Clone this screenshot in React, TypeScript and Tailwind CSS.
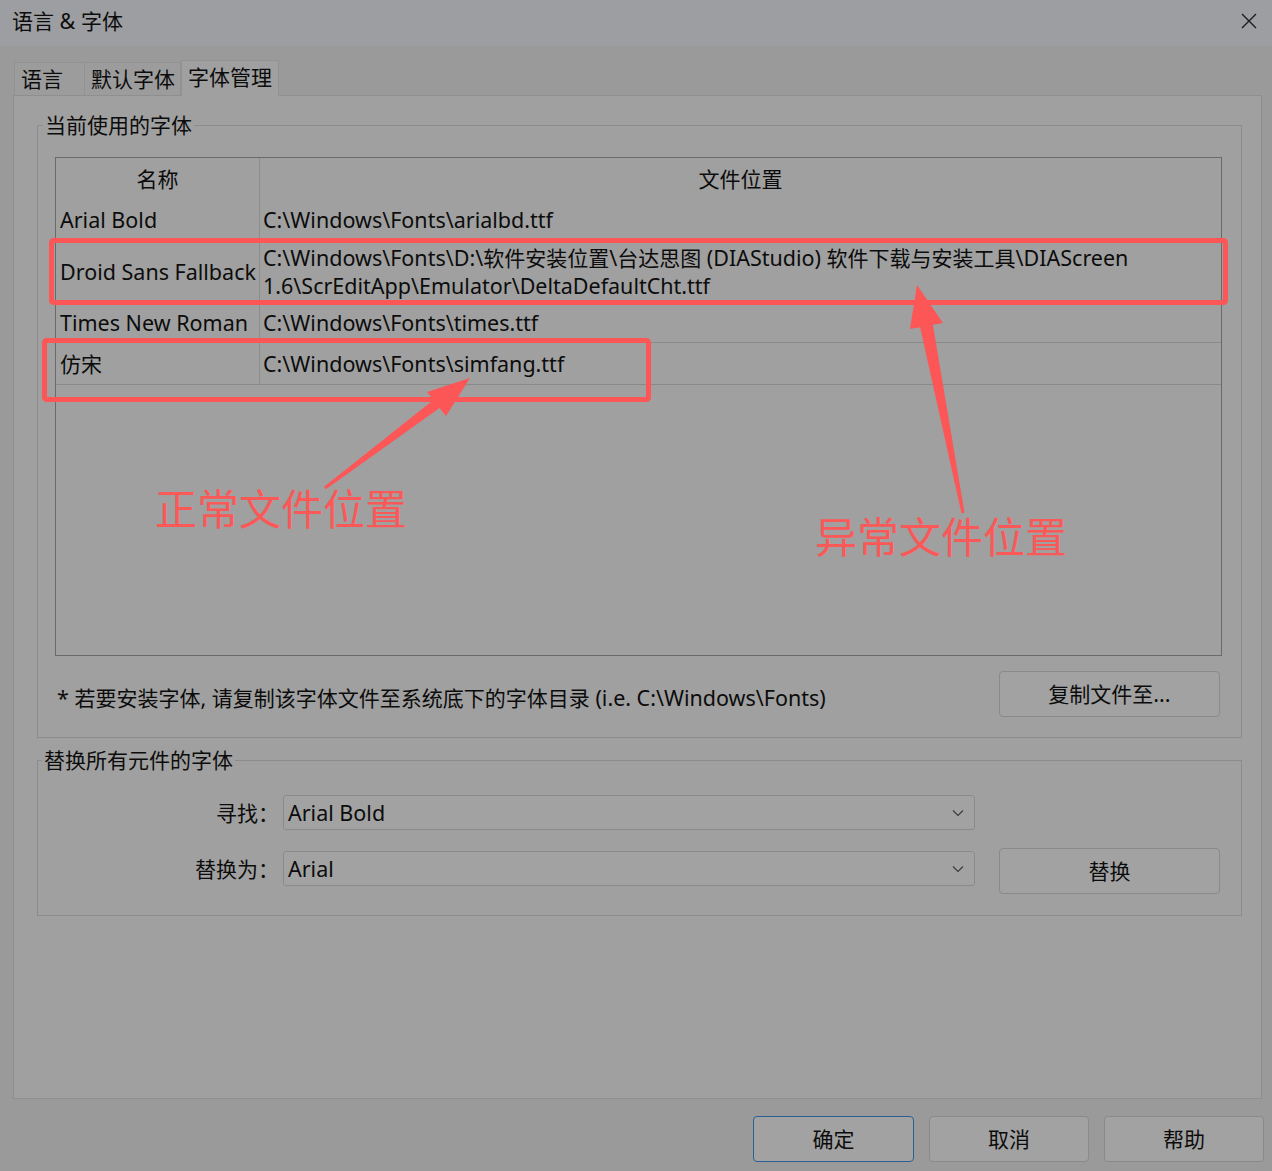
import React from "react";

const CJK = /([\u3000-\u303f\u4e00-\u9fff\uff00-\uffef]+)/;

function T({ s }: { s: string }) {
  const parts = s.split(CJK);
  return (
    <>
      {parts.map((p, i) =>
        i % 2 === 1 ? (
          <span key={i} className="text-[21px]">
            {p}
          </span>
        ) : (
          <React.Fragment key={i}>{p}</React.Fragment>
        )
      )}
    </>
  );
}

function Chevron() {
  return (
    <svg width="12" height="8" viewBox="0 0 12 8" className="mr-[10px]">
      <path d="M1 1.5 L6 6.5 L11 1.5" fill="none" stroke="#3a3a3a" strokeWidth="1.1" />
    </svg>
  );
}

function Button({ label, w, primary }: { label: string; w: string; primary?: boolean }) {
  return (
    <div
      className={
        "h-[46px] flex items-center justify-center rounded-[4px] bg-[#a2a2a2] border " +
        (primary ? "border-[#2b5f93] " : "border-[#8a8a8a] ") +
        w
      }
    >
      <T s={label} />
    </div>
  );
}

const rows: { name: string; path: React.ReactNode; h: string }[] = [
  { name: "Arial Bold", path: <T s="C:\Windows\Fonts\arialbd.ttf" />, h: "h-[41px]" },
  {
    name: "Droid Sans Fallback",
    path: (
      <>
        <T s="C:\Windows\Fonts\D:\软件安装位置\台达思图 (DIAStudio) 软件下载与安装工具\DIAScreen" />
        <br />
        <T s="1.6\ScrEditApp\Emulator\DeltaDefaultCht.ttf" />
      </>
    ),
    h: "h-[62px]",
  },
  { name: "Times New Roman", path: <T s="C:\Windows\Fonts\times.ttf" />, h: "h-[40px]" },
  { name: "仿宋", path: <T s="C:\Windows\Fonts\simfang.ttf" />, h: "h-[42px]" },
];

export default function App() {
  return (
    <div
      className="relative w-[1272px] h-[1171px] overflow-hidden bg-[#9a9a9a] text-[#0c0c0c] text-[21.5px] leading-[28px]"
      style={{ fontFamily: '"Noto Sans", "Noto Sans CJK SC", sans-serif' }}
    >
      {/* title bar */}
      <div className="h-[46px] bg-[#9c9ea1] flex items-center justify-between pl-[12px] pr-[15px]">
        <div className="-mt-[5px]">
          <T s="语言 & 字体" />
        </div>
        <svg width="16" height="16" viewBox="0 0 16 16" className="-mt-[5px]">
          <path d="M1 1 L15 15 M15 1 L1 15" stroke="#1c1c1c" strokeWidth="1.4" />
        </svg>
      </div>

      {/* body */}
      <div className="pl-[13px] pr-[10px]">
        {/* tabs */}
        <div className="mt-[14px] h-[35px] flex items-end pl-[1px]">
          <div className="w-[71px] h-[33px] pl-[6px] flex items-center bg-[#9c9c9c] border border-b-0 border-[#929292]">
            <T s="语言" />
          </div>
          <div className="w-[96px] h-[33px] pl-[6px] flex items-center bg-[#9c9c9c] border border-b-0 border-l-0 border-[#929292]">
            <T s="默认字体" />
          </div>
          <div className="relative z-10 -mb-px w-[98px] h-[36px] pl-[6px] pb-[3px] flex items-center bg-[#a0a0a0] border border-b-0 border-[#929292]">
            <T s="字体管理" />
          </div>
        </div>

        {/* tab panel */}
        <div className="h-[1004px] bg-[#a0a0a0] border border-[#8f8f8f] pl-[23px] pr-[19px]">
          {/* group 1 */}
          <fieldset className="mt-[15px] border border-[#8c8c8c] pl-[17px] pr-[19px] pt-[18px] pb-[20px]">
            <legend className="-ml-[12px] px-[2px] leading-[28px]">
              <T s="当前使用的字体" />
            </legend>
            <div className="h-[499px] border border-[#6a6a6a] flex flex-col">
              <div className="h-[42px] flex">
                <div className="w-[204px] border-r border-[#8c8c8c] flex items-center justify-center">
                  <T s="名称" />
                </div>
                <div className="flex-1 flex items-center justify-center">
                  <T s="文件位置" />
                </div>
              </div>
              {rows.map((r) => (
                <div key={r.name} className={"flex border-b border-[#8a8a8a] " + r.h}>
                  <div className="w-[204px] border-r border-[#8c8c8c] pl-[4px] flex items-center whitespace-nowrap">
                    <T s={r.name} />
                  </div>
                  <div className="flex-1 pl-[3px] flex items-center whitespace-nowrap">
                    <div>{r.path}</div>
                  </div>
                </div>
              ))}
            </div>
            <div className="mt-[15px] h-[46px] flex items-center justify-between pl-[2px] pr-[2px]">
              <div className="mt-[8px] whitespace-nowrap">
                <T s="* 若要安装字体, 请复制该字体文件至系统底下的字体目录 (i.e. C:\Windows\Fonts)" />
              </div>
              <Button label="复制文件至..." w="w-[221px]" />
            </div>
          </fieldset>

          {/* group 2 */}
          <fieldset className="mt-[8px] border border-[#8c8c8c] pt-[21px] pb-[21px] pr-[21px]">
            <legend className="ml-[4px] px-[2px] leading-[28px]">
              <T s="替换所有元件的字体" />
            </legend>
            <div className="h-[35px] flex items-center">
              <div className="w-[241px] text-right">
                <T s="寻找：" />
              </div>
              <div className="ml-[4px] w-[692px] h-[35px] border border-[#8a8a8a] rounded-[3px] bg-[#a2a2a2] flex items-center justify-between pl-[4px]">
                <span>Arial Bold</span>
                <Chevron />
              </div>
            </div>
            <div className="mt-[18px] h-[46px] flex items-start">
              <div className="w-[241px] mt-[3px] h-[35px] flex items-center justify-end">
                <T s="替换为：" />
              </div>
              <div className="ml-[4px] mt-[3px] w-[692px] h-[35px] border border-[#8a8a8a] rounded-[3px] bg-[#a2a2a2] flex items-center justify-between pl-[4px]">
                <span>Arial</span>
                <Chevron />
              </div>
              <div className="ml-[24px]">
                <Button label="替换" w="w-[221px]" />
              </div>
            </div>
          </fieldset>
        </div>
      </div>

      {/* bottom buttons */}
      <div className="mt-[17px] flex justify-end gap-[15px] pr-[8px]">
        <Button label="确定" w="w-[161px]" primary />
        <Button label="取消" w="w-[160px]" />
        <Button label="帮助" w="w-[160px]" />
      </div>

      {/* annotations */}
      <svg className="absolute left-0 top-0 pointer-events-none" width="1272" height="1171" viewBox="0 0 1272 1171">
        <rect x="51.5" y="240.5" width="1174" height="62" rx="2" fill="none" stroke="#fd5656" strokeWidth="5" />
        <rect x="44.5" y="340.5" width="604" height="59" rx="2" fill="none" stroke="#fd5656" strokeWidth="5" />
        <polygon
          fill="#fd5656"
          points="324.1,486.8 433.5,400 427,392 470,378 446,416 439.5,408 325.9,489.2"
        />
        <polygon
          fill="#fd5656"
          points="961.5,513.3 920.1,327.3 910,329 917,285 943,323 932.9,324.7 964.5,512.7"
        />
      </svg>
      <div
        className="absolute left-[155px] top-[486px] text-[42px] leading-[42px] text-[#fb5858] whitespace-nowrap"
        style={{ fontFamily: '"Noto Sans CJK SC", sans-serif' }}
      >
        正常文件位置
      </div>
      <div
        className="absolute left-[815px] top-[514px] text-[42px] leading-[42px] text-[#fb5858] whitespace-nowrap"
        style={{ fontFamily: '"Noto Sans CJK SC", sans-serif' }}
      >
        异常文件位置
      </div>
    </div>
  );
}
